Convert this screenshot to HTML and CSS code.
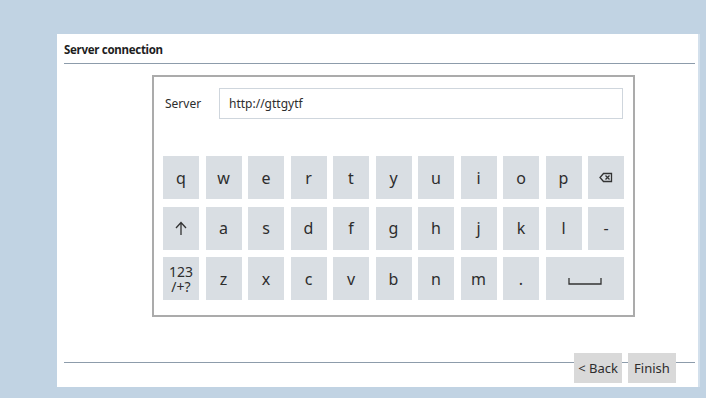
FILE: index.html
```
<!DOCTYPE html>
<html lang="en">
<head>
    <meta charset="UTF-8">
    <title>Server connection</title>
    <link rel="stylesheet" href="styles.css">
</head>
<body>
    <div class="panel">
        <div class="title">Server connection</div>

        <div class="keyboard-box">
            <div class="server-row">
                <span class="server-label">Server</span>
                <div class="server-input">http://gttgytf</div>
            </div>

            <div class="keys">
                <div class="key">q</div>
                <div class="key">w</div>
                <div class="key">e</div>
                <div class="key">r</div>
                <div class="key">t</div>
                <div class="key">y</div>
                <div class="key">u</div>
                <div class="key">i</div>
                <div class="key">o</div>
                <div class="key">p</div>
                <div class="key">
                    <svg width="14" height="11" viewBox="0 0 14 11">
                        <path d="M4.5 1.5h8v8h-8L1 5.5z" fill="none" stroke="#333" stroke-width="1.3"/>
                        <path d="M6.5 3.5l4 4M10.5 3.5l-4 4" stroke="#333" stroke-width="1.3"/>
                    </svg>
                </div>

                <div class="key">
                    <svg width="12" height="15" viewBox="0 0 12 15">
                        <path d="M6 14V2M1 7l5-5.5L11 7" fill="none" stroke="#333" stroke-width="1.3"/>
                    </svg>
                </div>
                <div class="key">a</div>
                <div class="key">s</div>
                <div class="key">d</div>
                <div class="key">f</div>
                <div class="key">g</div>
                <div class="key">h</div>
                <div class="key">j</div>
                <div class="key">k</div>
                <div class="key">l</div>
                <div class="key">-</div>

                <div class="key key-small">123
/+?</div>
                <div class="key">z</div>
                <div class="key">x</div>
                <div class="key">c</div>
                <div class="key">v</div>
                <div class="key">b</div>
                <div class="key">n</div>
                <div class="key">m</div>
                <div class="key">.</div>
                <div class="key key-space">
                    <svg width="34" height="7" viewBox="0 0 34 7">
                        <path d="M1 0v6h32V0" fill="none" stroke="#333" stroke-width="1.3"/>
                    </svg>
                </div>
            </div>
        </div>

        <div class="footer">
            <button class="btn">&lt; Back</button>
            <button class="btn">Finish</button>
        </div>
    </div>
</body>
</html>
```

FILE: styles.css
```
body {
    margin: 0;
    background: #c1d3e3;
    font-family: "Noto Sans", "Open Sans", sans-serif;
    color: #2d2d2d;
}

.panel {
    margin: 34px 0 0 57px;
    width: 641px;
    height: 353px;
    background: #fff;
    box-shadow: 2px 0 0 #d3e0ec;
}

.title {
    margin: 0 3px 0 7px;
    height: 29px;
    line-height: 32px;
    font-size: 11.5px;
    font-weight: bold;
    letter-spacing: -0.3px;
    color: #1e1e1e;
    border-bottom: 1px solid #8d9cab;
}

.keyboard-box {
    margin: 11px 0 0 95px;
    width: 479px;
    height: 238px;
    border: 2px solid #ababab;
    box-sizing: content-box;
}

.server-row {
    display: flex;
    align-items: center;
    margin: 11px 10px 0 11px;
}
.server-label {
    width: 54px;
    font-size: 12px;
}
.server-input {
    flex: 1;
    height: 29px;
    line-height: 29px;
    padding-left: 9px;
    border: 1px solid #cfd6dd;
    font-size: 12px;
}

.keys {
    display: grid;
    grid-template-columns: repeat(11, 1fr);
    grid-auto-rows: 43px;
    column-gap: 6.5px;
    row-gap: 7.5px;
    width: 461px;
    margin: 37px 0 0 9px;
}
.key {
    display: flex;
    align-items: center;
    justify-content: center;
    background: #d9dee3;
    font-size: 16px;
    color: #2d2d2d;
}
.key-small {
    white-space: pre-line;
    text-align: center;
    font-size: 14px;
    line-height: 15px;
}
.key-space {
    grid-column: span 2;
    padding-top: 6px;
}

.footer {
    display: flex;
    justify-content: flex-end;
    gap: 6px;
    margin: 36px 3px 0 7px;
    padding-right: 19px;
    height: 30px;
    background: linear-gradient(#8d9cab, #8d9cab) 0 9px / 100% 1px no-repeat;
}
.btn {
    width: 48px;
    height: 30px;
    padding: 0;
    border: none;
    background: #d9d9d9;
    font-family: inherit;
    font-size: 13px;
    color: #2d2d2d;
}
```
